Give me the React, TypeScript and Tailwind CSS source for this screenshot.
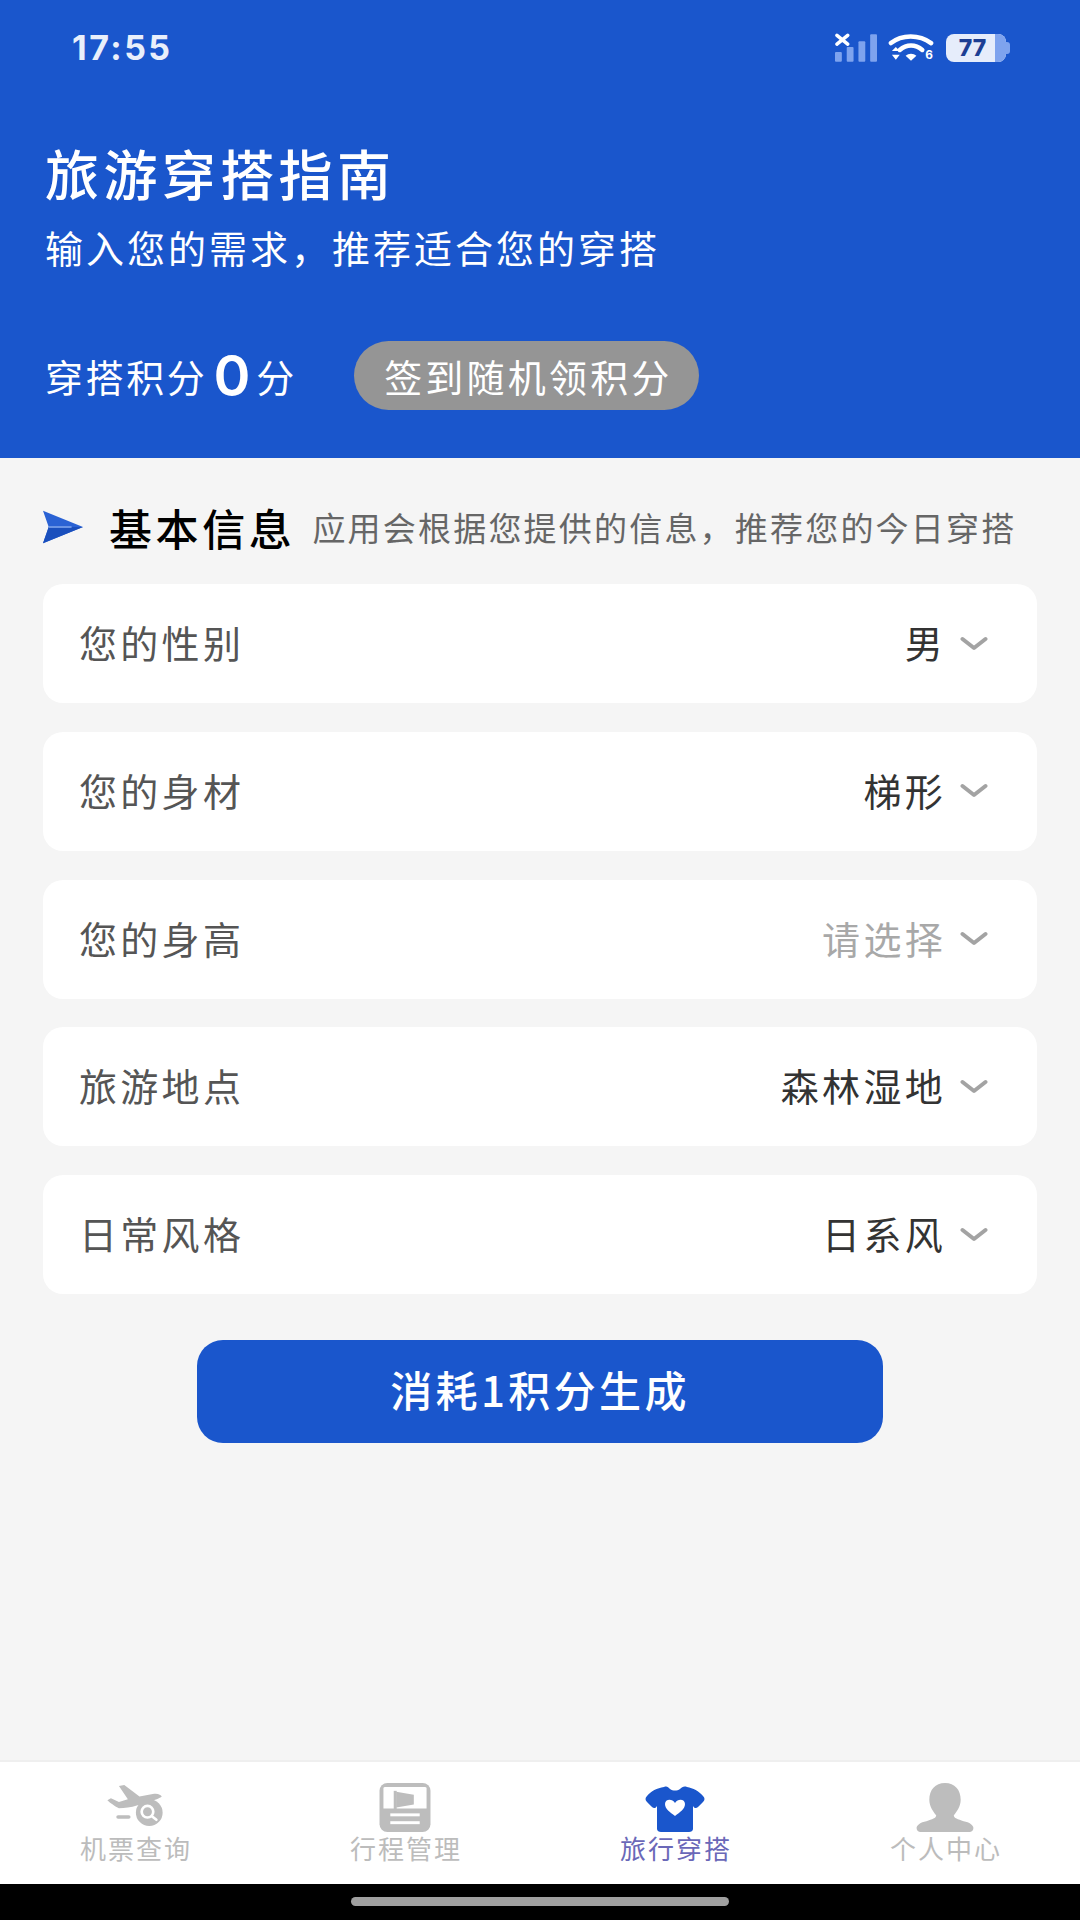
const font = { fontFamily: '"Noto Sans CJK SC", "Noto Sans", sans-serif' };

function Chevron() {
  return (
    <svg width="28" height="16" viewBox="0 0 28 16" className="shrink-0">
      <path d="M2.5 3 L14 12 L25.5 3" fill="none" stroke="#a3a3a3" strokeWidth="4" strokeLinecap="round" strokeLinejoin="round" />
    </svg>
  );
}

function Row({ label, value, muted }: { label: string; value: string; muted?: boolean }) {
  return (
    <div className="flex h-[119px] items-center justify-between rounded-[20px] bg-white pl-[36px] pr-[49px]">
      <span className="mb-[3px] text-[38px] leading-none tracking-[3.3px] text-[#555555]">{label}</span>
      <div className="flex items-center gap-[14px]">
        <span className={`mb-[3px] text-[38px] leading-none tracking-[3.3px] ${muted ? "text-[#a8a8a8]" : "text-[#333333]"}`}>{value}</span>
        <Chevron />
      </div>
    </div>
  );
}

function StatusIcons() {
  return (
    <div className="flex items-center gap-[11px]">
      <svg width="42" height="30" viewBox="0 0 43 30">
        <g stroke="#fff" strokeWidth="3.6" strokeLinecap="round">
          <path d="M2 2 L13 11 M13 2 L2 11" />
        </g>
        <g fill="#7ea3ee">
          <rect x="0" y="19" width="7" height="10" rx="1" />
          <rect x="12" y="14" width="7" height="15" rx="1" />
          <rect x="24" y="8" width="7" height="21" rx="1" />
          <rect x="36" y="1" width="7" height="28" rx="1" />
        </g>
      </svg>
      <svg width="47" height="30" viewBox="0 0 48 30">
        <g fill="none" stroke="#fff" strokeWidth="4.6" strokeLinecap="round">
          <path d="M3 10 C14 1 32 1 44 10" />
          <path d="M12 17 C19 11 28 11 35 17" />
        </g>
        <path d="M18 23 C21 20 26 20 29 23 L23.5 28 Z" fill="#fff" />
        <path d="M4 18 L8 14 L12 18 Z M4 22 L12 22 L8 27 Z" fill="#fff" />
        <text x="38" y="26" fontSize="12" fontWeight="700" fill="#fff" fontFamily="Inter, sans-serif">6</text>
      </svg>
      <div className="flex items-center">
        <div className="flex h-[28px] w-[60px] items-center overflow-hidden rounded-[8px] bg-[#e6edfb]">
          <span className="w-[49px] pl-[4px] text-center text-[23px] font-extrabold leading-none text-[#1c3f94]" style={{ fontFamily: "Inter, sans-serif" }}>77</span>
          <div className="h-full flex-1 bg-[#7ea3ee]" />
        </div>
        <div className="h-[12px] w-[4px] rounded-r-[3px] bg-[#7ea3ee]" />
      </div>
    </div>
  );
}

function PlaneIcon() {
  return (
    <svg width="60" height="41" viewBox="1 0 62 46" className="mb-[6px]">
      <path d="M14 1 L20 0 L37 13 L52 10 C58 9 61 11 62 13 C60 15 54 17 48 19 L34 23 C28 25 20 26 14 26 C10 24 4 20 1 17 L5 15 L14 19 L24 16 Z" fill="#bdbdbd" />
      <rect x="11" y="34" width="16" height="4" rx="2" fill="#bdbdbd" />
      <circle cx="48" cy="31" r="15" fill="#bdbdbd" />
      <circle cx="46" cy="30" r="6.5" fill="none" stroke="#fff" strokeWidth="3" />
      <path d="M51 35 L56 39" stroke="#fff" strokeWidth="3" strokeLinecap="round" />
    </svg>
  );
}

function PlanIcon() {
  return (
    <svg width="52" height="49" viewBox="0 0 52 50">
      <rect width="52" height="50" rx="8" fill="#bdbdbd" />
      <path d="M4 5 Q4 4 6 4 H46 Q48 4 48 5 V26 H4 Z" fill="#fff" />
      <path d="M16 8 V27" stroke="#bdbdbd" strokeWidth="3" />
      <path d="M17 9 L35 12 V22 L17 25 Z" fill="#bdbdbd" />
      <rect x="11" y="31" width="30" height="3" fill="#fff" />
      <rect x="11" y="39" width="30" height="3" fill="#fff" />
    </svg>
  );
}

function ShirtIcon() {
  return (
    <svg width="60" height="46" viewBox="0 0 60 46">
      <path d="M19 1 C22 0 23 1 25 3 C28 5 32 5 35 3 C37 1 39 0 42 1 C48 2 54 5 58 10 C60 12 60 14 58 16 L53 21 C51 23 49 22 48 20 V43 C48 45 46 46 44 46 H16 C14 46 12 45 12 43 V20 C11 22 9 23 7 21 L2 16 C0 14 0 12 2 10 C6 5 12 2 19 1 Z" fill="#1a56cc" />
      <path d="M30 30 C25 26 20 23 20 18 C20 13 27 12 30 17 C33 12 40 13 40 18 C40 23 35 26 30 30 Z" fill="#fff" />
    </svg>
  );
}

function PersonIcon() {
  return (
    <svg width="58" height="49" viewBox="0 0 58 50">
      <path d="M29 0 C39 0 45 7 45 17 C45 24 41 29 38 33 C38 36 42 37 48 39 C54 40 58 43 58 46 C58 49 56 50 54 50 H4 C2 50 0 49 0 46 C0 43 4 40 10 39 C16 37 20 36 20 33 C17 29 13 24 13 17 C13 7 19 0 29 0 Z" fill="#bdbdbd" />
    </svg>
  );
}

function NavItem({ icon, label, active }: { icon: React.ReactNode; label: string; active?: boolean }) {
  return (
    <div className="flex flex-1 flex-col items-center">
      <div className="flex h-[50px] items-end">{icon}</div>
      <span className={`mt-[1px] pl-[2px] text-[26px] leading-[30px] tracking-[2px] ${active ? "text-[#6a68b8]" : "text-[#bcbcbc]"}`}>{label}</span>
    </div>
  );
}

export default function App() {
  return (
    <div className="flex h-[1920px] w-[1080px] flex-col overflow-hidden bg-[#f5f5f5]" style={font}>
      <header className="flex h-[458px] shrink-0 flex-col bg-[#1a56cc] text-white">
        <div className="flex h-[96px] items-center justify-between pl-[72px] pr-[70px]">
          <span className="text-[34px] font-bold leading-none tracking-[2.5px] text-[#e9effb]" style={{ fontFamily: "Inter, sans-serif" }}>17:55</span>
          <StatusIcons />
        </div>
        <div className="pl-[45px]">
          <h1 className="mt-[47px] text-[54px] font-medium leading-[60px] tracking-[4.4px]">旅游穿搭指南</h1>
          <p className="mt-[21px] text-[38px] leading-[46px] tracking-[3px]">输入您的需求，推荐适合您的穿搭</p>
          <div className="mt-[71px] flex items-center">
            <span className="text-[38px] leading-none tracking-[2.6px]">穿搭积分</span>
            <span className="ml-[6px] text-[56px] font-semibold leading-none" style={{ fontFamily: "Inter, sans-serif" }}>0</span>
            <span className="ml-[6px] text-[38px] leading-none">分</span>
            <button className="ml-[60px] flex h-[69px] w-[345px] items-center justify-center rounded-full bg-[#959595] pl-[3px] text-[38px] leading-none tracking-[3.2px] text-white">签到随机领积分</button>
          </div>
        </div>
      </header>

      <main className="flex flex-1 flex-col px-[43px]">
        <div className="flex h-[126px] items-center pt-[12px]">
          <svg width="40" height="34" viewBox="0 0 42 34" className="shrink-0">
            <path d="M0 0 L42 17 L0 34 L6 17 Z" fill="#2a62d4" />
            <path d="M6 17 L42 17 L0 34 Z" fill="#1a4fbd" />
            <path d="M6 16 H30 V18 H6 Z" fill="#6f97e6" />
          </svg>
          <h2 className="ml-[26px] text-[43px] font-medium leading-none tracking-[3.6px] text-black">基本信息</h2>
          <p className="ml-[17px] whitespace-nowrap text-[33px] leading-none tracking-[2.2px] text-[#666666]">应用会根据您提供的信息，推荐您的今日穿搭</p>
        </div>
        <div className="flex flex-col gap-[28.8px]">
          <Row label="您的性别" value="男" />
          <Row label="您的身材" value="梯形" />
          <Row label="您的身高" value="请选择" muted />
          <Row label="旅游地点" value="森林湿地" />
          <Row label="日常风格" value="日系风" />
        </div>
        <button className="mx-auto mt-[46px] flex h-[103px] w-[686px] items-center justify-center rounded-[26px] bg-[#1a56cc] pb-[5px] text-[42px] font-medium leading-none tracking-[3.4px] text-white">消耗1积分生成</button>
      </main>

      <nav className="flex h-[124px] shrink-0 border-t-[2px] border-[#efefef] bg-white pt-[20px]">
        <NavItem icon={<PlaneIcon />} label="机票查询" />
        <NavItem icon={<PlanIcon />} label="行程管理" />
        <NavItem icon={<ShirtIcon />} label="旅行穿搭" active />
        <NavItem icon={<PersonIcon />} label="个人中心" />
      </nav>
      <div className="flex h-[36px] shrink-0 justify-center bg-black pt-[13px]">
        <div className="h-[9px] w-[378px] rounded-full bg-[#a0a0a0]" />
      </div>
    </div>
  );
}
